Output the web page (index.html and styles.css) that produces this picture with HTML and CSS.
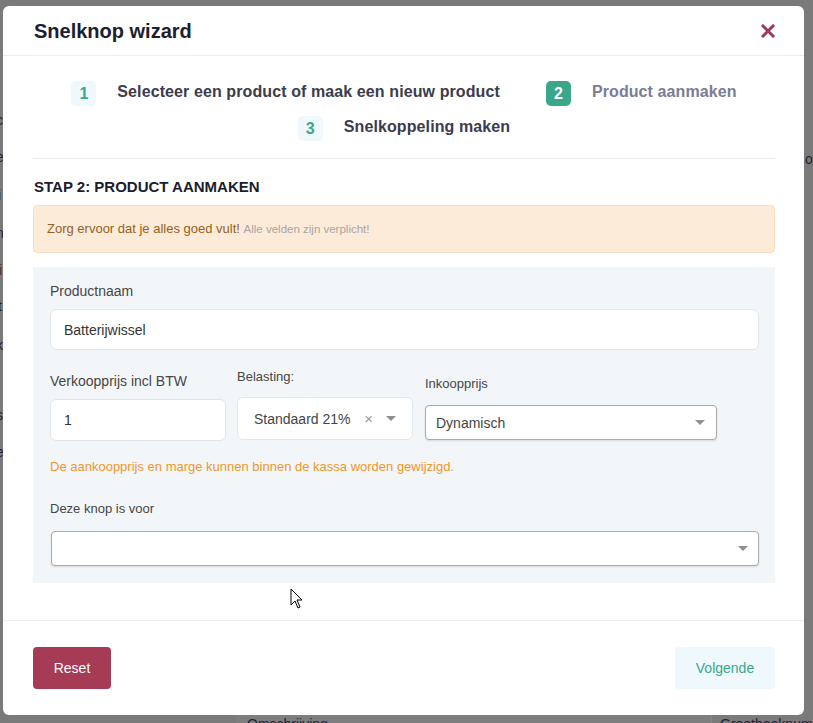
FILE: index.html
```html
<!DOCTYPE html>
<html lang="nl">
<head>
<meta charset="utf-8">
<title>Snelknop wizard</title>
<link rel="stylesheet" href="styles.css">
</head>
<body>
<div class="backdrop" aria-hidden="true">
  <span class="frag f1">c</span>
  <span class="frag f2">e</span>
  <span class="frag f3">i</span>
  <span class="frag f4">n</span>
  <span class="frag f5">i</span>
  <span class="frag f6">t</span>
  <span class="frag f7">k</span>
  <span class="frag f8">s</span>
  <span class="frag f9">e</span>
  <span class="frag r1">o</span>
  <span class="bottom-strip"></span>
  <span class="frag b1">Omschrijving</span>
  <span class="frag b2">Grootboeknummer</span>
</div>

<div class="modal">
  <div class="modal-header">
    <h1 class="modal-title">Snelknop wizard</h1>
    <button class="close-btn" aria-label="Sluiten">
      <svg width="14" height="14" viewBox="0 0 14 14"><path d="M2 2 L12 12 M12 2 L2 12" stroke="#a33a55" stroke-width="3" stroke-linecap="square"/></svg>
    </button>
  </div>

  <div class="modal-body">
    <div class="steps">
      <div class="step">
        <span class="badge">1</span>
        <span class="step-label">Selecteer een product of maak een nieuw product</span>
      </div>
      <div class="step">
        <span class="badge active">2</span>
        <span class="step-label muted">Product aanmaken</span>
      </div>
      <div class="step">
        <span class="badge">3</span>
        <span class="step-label">Snelkoppeling maken</span>
      </div>
    </div>

    <h2 class="stap-title">STAP 2: PRODUCT AANMAKEN</h2>

    <div class="alert">Zorg ervoor dat je alles goed vult! <small>Alle velden zijn verplicht!</small></div>

    <div class="form-panel">
      <label class="label label-name">Productnaam</label>
      <div class="input input-name">Batterijwissel</div>

      <div class="price-row">
        <div class="col col-price">
          <label class="label label-price">Verkoopprijs incl BTW</label>
          <div class="input input-price">1</div>
        </div>
        <div class="col col-tax">
          <label class="label label-small label-tax">Belasting:</label>
          <div class="tax-box">
            <span class="tax-value">Standaard 21%</span>
            <span class="clear">×</span>
            <span class="caret"></span>
          </div>
        </div>
        <div class="col col-cost">
          <label class="label label-small label-cost">Inkoopprijs</label>
          <div class="select select-cost">
            <span>Dynamisch</span>
            <span class="caret"></span>
          </div>
        </div>
      </div>

      <p class="note">De aankoopprijs en marge kunnen binnen de kassa worden gewijzigd.</p>

      <label class="label label-small label-for">Deze knop is voor</label>
      <div class="select select-for">
        <span></span>
        <span class="caret"></span>
      </div>
    </div>
  </div>

  <div class="modal-footer">
    <button class="btn btn-reset">Reset</button>
    <button class="btn btn-next">Volgende</button>
  </div>
</div>

<svg class="cursor" width="14" height="22" viewBox="0 0 14 22" aria-hidden="true">
  <path d="M1 1 L1 17 L5 13 L8 20 L10 19 L7 12 L12 12 Z" fill="#fff" stroke="#000" stroke-width="1" stroke-linejoin="round"/>
</svg>
</body>
</html>
```

FILE: styles.css
```css
* { box-sizing: border-box; }

html, body {
  margin: 0;
  padding: 0;
}

body {
  width: 813px;
  height: 723px;
  overflow: hidden;
  background: #7a7a7a;
  font-family: "Liberation Sans", Arial, sans-serif;
  color: #444;
  position: relative;
}

/* dimmed page behind the overlay */
.backdrop {
  position: absolute;
  inset: 0;
  z-index: 0;
}
.frag {
  position: absolute;
  font-size: 14px;
  line-height: 16px;
  color: #1f2235;
  white-space: nowrap;
}
.f1 { left: -4px; top: 112px; }
.f2 { left: -4px; top: 149px; }
.f3 { left: -2px; top: 187px; }
.f4 { left: -4px; top: 225px; }
.f5 { left: -1px; top: 262px; color: #4a3520; }
.f6 { left: -2px; top: 298px; }
.f7 { left: -4px; top: 337px; }
.f8 { left: -4px; top: 407px; }
.f9 { left: -4px; top: 444px; }
.r1 { left: 805px; top: 151px; }
.bottom-strip {
  position: absolute;
  left: 236px;
  top: 715px;
  width: 476px;
  height: 8px;
  background: #7e7e7e;
  border-right: 1px solid #868686;
}
.b1 { left: 247px; top: 716px; }
.b2 { left: 720px; top: 716px; }

/* modal */
.modal {
  position: relative;
  z-index: 1;
  margin: 6px 0 0 3px;
  width: 801px;
  background: #fff;
  border-radius: 6px;
}

.modal-header {
  display: flex;
  align-items: center;
  justify-content: space-between;
  padding: 13px 28px 12px 31px;
  border-bottom: 1px solid #ececec;
}

.modal-title {
  margin: 0;
  font-size: 20px;
  line-height: 24px;
  font-weight: bold;
  color: #1c1d2e;
}

.close-btn {
  border: 0;
  background: none;
  padding: 0;
  width: 16px;
  height: 16px;
  display: flex;
  align-items: center;
  justify-content: center;
  cursor: pointer;
}

.modal-body {
  padding: 0 29px 37px 30px;
}

/* steps */
.steps {
  display: flex;
  flex-wrap: wrap;
  justify-content: center;
  gap: 10px 46px;
  padding: 25px 0 17px;
  border-bottom: 1px solid #eaecef;
}
.step {
  display: flex;
  align-items: center;
  gap: 21px;
}
.badge {
  width: 25px;
  height: 25px;
  border-radius: 5px;
  background: #eff8fd;
  color: #3aa78a;
  font-size: 16px;
  font-weight: bold;
  display: flex;
  align-items: center;
  justify-content: center;
  padding-top: 1px;
}
.badge.active {
  background: #3ba68a;
  color: #fff;
}
.step-label {
  font-size: 16px;
  font-weight: bold;
  color: #3b3c4d;
  line-height: 20px;
  margin-top: -3px;
  letter-spacing: 0.1px;
}
.step-label.muted {
  color: #7b7c95;
}

.stap-title {
  margin: 18px 0 8px 1px;
  font-size: 15px;
  line-height: 20px;
  font-weight: bold;
  color: #1b1c2c;
}

.alert {
  background: #fcebd8;
  border: 1px solid #f9dcc0;
  border-radius: 4px;
  padding: 15px 13px;
  font-size: 13px;
  line-height: 15px;
  color: #94611f;
}
.alert small {
  font-size: 11.5px;
  color: #aaa5a2;
}

/* form panel */
.form-panel {
  margin-top: 14px;
  background: #f3f6f9;
  padding: 16px 16px 17px 17px;
}

.label {
  display: block;
  font-size: 14px;
  line-height: 17px;
  color: #454545;
}
.label-small {
  font-size: 13px;
}
.label-name { margin-bottom: 9px; }

.input {
  background: #fff;
  border: 1px solid #e2e6ea;
  border-radius: 6px;
  font-size: 14px;
  color: #333;
  display: flex;
  align-items: center;
}
.input-name {
  height: 41px;
  padding-left: 13px;
}

.price-row {
  display: flex;
  align-items: flex-start;
  margin-top: 18px;
}
.col-price { width: 176px; margin-top: 5px; }
.col-tax { width: 176px; margin-left: 11px; }
.col-cost { width: 292px; margin-left: 12px; margin-top: 7px; }

.label-price { margin-bottom: 9px; }
.label-tax { margin-bottom: 12px; }
.label-cost { margin-bottom: 13px; }

.input-price {
  height: 42px;
  padding-left: 13px;
}

.tax-box {
  height: 43px;
  background: #fff;
  border: 1px solid #e2e6ea;
  border-radius: 6px;
  display: flex;
  align-items: center;
  padding-left: 16px;
  font-size: 14px;
  color: #444;
}
.tax-value { flex: 1; }
.clear {
  color: #9a9a9a;
  font-size: 15px;
  margin-right: 13px;
}
.tax-box .caret { margin-right: 16px; }

.caret {
  width: 0;
  height: 0;
  border-left: 5px solid transparent;
  border-right: 5px solid transparent;
  border-top: 5px solid #8f8f8f;
}

.select {
  background: #fff;
  border: 1px solid #aaaaaa;
  border-radius: 4px;
  box-shadow: 0 1px 2px rgba(0, 0, 0, 0.12);
  display: flex;
  align-items: center;
  justify-content: space-between;
  font-size: 14px;
  color: #444;
}
.select-cost {
  height: 35px;
  padding: 0 11px 0 10px;
}
.select-for {
  height: 35px;
  margin-left: 1px;
  padding: 0 10px 0 10px;
}

.note {
  margin: 18px 0 0;
  font-size: 13px;
  line-height: 16px;
  color: #f0962b;
}

.label-for {
  margin-top: 25px;
  margin-bottom: 14px;
}

/* footer */
.modal-footer {
  display: flex;
  justify-content: space-between;
  align-items: center;
  padding: 26px 29px 26px 30px;
  border-top: 1px solid #eaecef;
}

.btn {
  height: 42px;
  border: 0;
  border-radius: 4px;
  font-family: "Liberation Sans", Arial, sans-serif;
  font-size: 14px;
  cursor: pointer;
}
.btn-reset {
  width: 78px;
  background: #a63b56;
  color: #fff;
}
.btn-next {
  width: 100px;
  background: #eff8fd;
  color: #3aa78a;
}

.cursor {
  position: absolute;
  left: 290px;
  top: 588px;
  z-index: 2;
}
```
